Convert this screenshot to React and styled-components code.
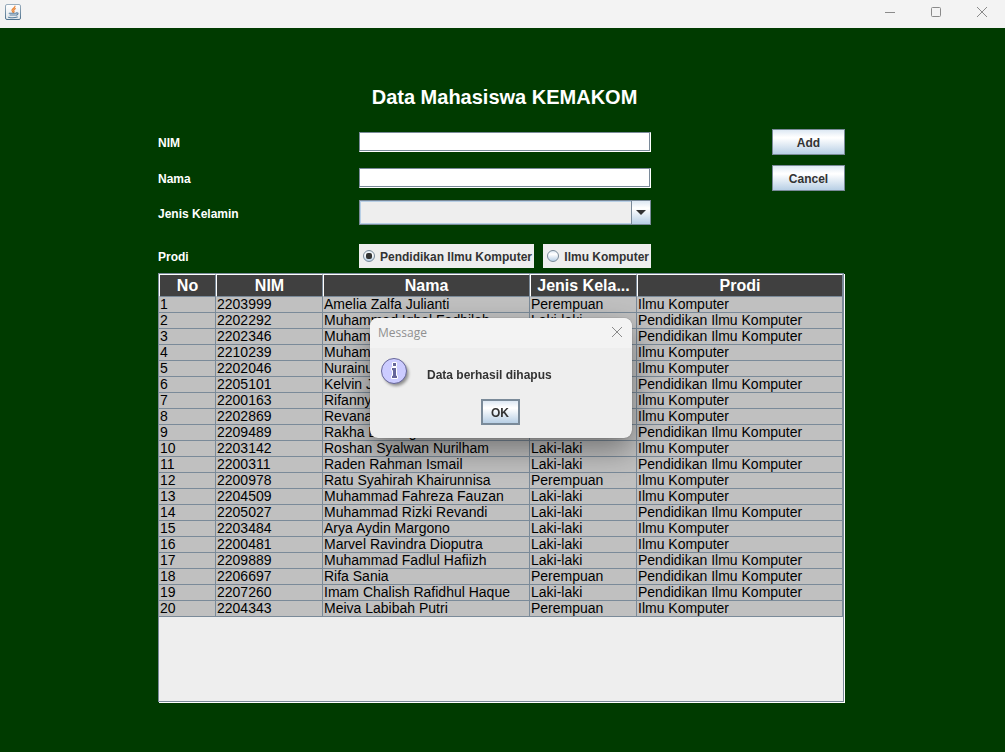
import React, { useState } from 'react';
import styled, { createGlobalStyle, css } from 'styled-components';

const STEEL = '#7a8a99';
const INK = '#333333';
const metal = css`
  background: linear-gradient(#dde8f3 0%, #ffffff 30%, #ffffff 34%, #b8cfe5 100%);
`;

const GlobalStyle = createGlobalStyle`
  * { box-sizing: border-box; }
  body {
    margin: 0;
    background: #003b00;
    font-family: "Liberation Sans", Arial, sans-serif;
  }
`;

const Window = styled.div`
  min-height: 100vh;
  display: flex;
  flex-direction: column;
  background: #003b00;
`;

const TitleBar = styled.header`
  height: 28px;
  padding: 0 0 0 5px;
  display: flex;
  align-items: center;
  justify-content: space-between;
  background: #f3f3f3;
`;

const JavaIcon = styled.svg`
  width: 16px;
  height: 16px;
  margin-bottom: 4px;
`;

const WindowControls = styled.div`
  display: flex;
  margin-bottom: 4px;
`;

const IconButton = styled.button`
  width: ${(p) => p.$width || 46}px;
  height: 24px;
  padding: 0;
  border: 0;
  background: none;
  display: flex;
  align-items: center;
  justify-content: center;
`;

const Content = styled.main`
  flex: 1;
  padding: 57px 160px 49px 158px;
  display: flex;
  flex-direction: column;
`;

const Heading = styled.h1`
  margin: 0 0 20px;
  padding-left: 6px;
  font-size: 20px;
  line-height: 24px;
  text-align: center;
  color: #ffffff;
`;

const Form = styled.form`
  display: flex;
  flex-direction: column;
`;

const Row = styled.div`
  display: grid;
  grid-template-columns: 201px minmax(0, 1fr) 73px;
  align-items: center;
  min-height: 24px;
  margin-bottom: ${(p) => p.$gap}px;
`;

const Label = styled.label`
  padding-top: 2px;
  font-size: 12px;
  line-height: 16px;
  font-weight: bold;
  color: #ffffff;
`;

const Field = styled.div`
  margin-right: 121px;
  display: flex;
  justify-content: space-between;
`;

const TextField = styled.input`
  flex: 1;
  min-width: 0;
  height: 20px;
  padding: 0 3px;
  border: 1px solid #ffffff;
  border-top-color: ${STEEL};
  border-left-color: ${STEEL};
  border-radius: 0;
  box-shadow: inset -1px -1px 0 ${STEEL};
  background: #ffffff;
  font: 12px "Liberation Sans", Arial, sans-serif;
  outline: none;
`;

const ComboBox = styled.div`
  flex: 1;
  height: 25px;
  display: grid;
  grid-template-columns: minmax(0, 1fr) 19px;
  border: 1px solid ${STEEL};
`;

const Select = styled.select`
  grid-column: 1 / 3;
  grid-row: 1;
  appearance: none;
  width: 100%;
  height: 23px;
  padding: 0 24px 0 4px;
  border: 1px solid #b8cfe5;
  border-radius: 0;
  background: #eeeeee;
  font: bold 12px "Liberation Sans", Arial, sans-serif;
  color: ${INK};
  outline: none;
`;

const ComboArrow = styled.span`
  grid-column: 2;
  grid-row: 1;
  z-index: 1;
  display: flex;
  align-items: center;
  justify-content: center;
  border-left: 1px solid ${STEEL};
  pointer-events: none;
  ${metal}
`;

const RadioLabel = styled.label`
  height: 24px;
  padding: 0 2px 0 4px;
  display: flex;
  align-items: center;
  gap: 5px;
  background: #eeeeee;
  font-size: 12px;
  line-height: 16px;
  font-weight: bold;
  color: ${INK};
  white-space: nowrap;
`;

const RadioText = styled.span`
  padding-top: 2px;
`;

const Radio = styled.input`
  appearance: none;
  flex: none;
  width: 12px;
  height: 12px;
  margin: 0;
  border: 1px solid ${STEEL};
  border-radius: 50%;
  display: grid;
  place-items: center;
  ${metal}

  &:checked::after {
    content: "";
    width: 6px;
    height: 6px;
    border-radius: 2px;
    background: ${INK};
  }
`;

const Button = styled.button`
  height: 26px;
  padding: 1px 0 0;
  border: ${(p) => (p.$focused ? 2 : 1)}px solid ${STEEL};
  border-radius: 0;
  ${metal}
  font: bold 12px "Liberation Sans", Arial, sans-serif;
  color: ${INK};
  ${(p) => p.$focused && 'width: 39px;'}
`;

const ScrollPane = styled.div`
  flex: 1;
  margin: 0 1px 1px 0;
  border: 1px solid ${STEEL};
  box-shadow: 1px 1px 0 #ffffff;
  background: #eeeeee;
`;

const Table = styled.table`
  width: 100%;
  table-layout: fixed;
  border-collapse: separate;
  border-spacing: 0;
`;

const HeadCell = styled.th`
  height: 23px;
  padding: 0;
  border: 1px solid ${STEEL};
  border-top-color: #ffffff;
  border-left-color: #ffffff;
  background: #404040;
  font-size: 16px;
  line-height: 20px;
  color: #ffffff;
  white-space: nowrap;
`;

const Cell = styled.td`
  height: 16px;
  padding: 0 0 0 1px;
  border: solid ${STEEL};
  border-width: 0 1px 1px 0;
  background: #c0c0c0;
  font-size: 14px;
  line-height: 15px;
  color: #000000;
  white-space: nowrap;
  overflow: hidden;
`;

const Dialog = styled.section`
  position: fixed;
  top: 318px;
  left: 370px;
  width: 262px;
  height: 120px;
  border-radius: 8px;
  overflow: hidden;
  background: #eeeeee;
  box-shadow: 0 0 1px rgba(0, 0, 0, 0.6), 0 12px 30px rgba(0, 0, 0, 0.4);
`;

const DialogBar = styled.div`
  height: 30px;
  padding-left: 8px;
  display: flex;
  align-items: flex-start;
  justify-content: space-between;
  background: #f3f3f3;
  font: 12px/30px "Open Sans", "Noto Sans", sans-serif;
  color: #909090;

  ${IconButton} {
    height: 28px;
  }
`;

const DialogBody = styled.div`
  padding: 9px 0 0 10px;
  display: flex;
  align-items: center;
  gap: 15px;
`;

const Message = styled.p`
  margin: 0;
  padding-top: 4px;
  font-size: 12px;
  line-height: 16px;
  font-weight: bold;
  color: ${INK};
`;

const DialogActions = styled.div`
  margin-top: 10px;
  padding-right: 2px;
  display: flex;
  justify-content: center;
`;

const COLUMNS = [
  ['No', 57],
  ['NIM', 107],
  ['Nama', 207],
  ['Jenis Kela...', 107],
  ['Prodi', null],
];

const L = 'Laki-laki';
const P = 'Perempuan';
const IK = 'Ilmu Komputer';
const PIK = 'Pendidikan Ilmu Komputer';

const STUDENTS = [
  ['2203999', 'Amelia Zalfa Julianti', P, IK],
  ['2202292', 'Muhammad Iqbal Fadhilah', L, PIK],
  ['2202346', 'Muhammad Rifky Afandi', L, PIK],
  ['2210239', 'Muhammad Hisyam', L, IK],
  ['2202046', 'Nurainun', P, IK],
  ['2205101', 'Kelvin Julian Putra', L, PIK],
  ['2200163', 'Rifanny Lysara', P, IK],
  ['2202869', 'Revana Faliha Salma', P, IK],
  ['2209489', 'Rakha Dhifiargo', L, PIK],
  ['2203142', 'Roshan Syalwan Nurilham', L, IK],
  ['2200311', 'Raden Rahman Ismail', L, PIK],
  ['2200978', 'Ratu Syahirah Khairunnisa', P, IK],
  ['2204509', 'Muhammad Fahreza Fauzan', L, IK],
  ['2205027', 'Muhammad Rizki Revandi', L, PIK],
  ['2203484', 'Arya Aydin Margono', L, IK],
  ['2200481', 'Marvel Ravindra Dioputra', L, IK],
  ['2209889', 'Muhammad Fadlul Hafiizh', L, PIK],
  ['2206697', 'Rifa Sania', P, PIK],
  ['2207260', 'Imam Chalish Rafidhul Haque', L, PIK],
  ['2204343', 'Meiva Labibah Putri', P, IK],
];

function CloseGlyph() {
  return (
    <svg width="12" height="12" viewBox="0 0 12 12" fill="none" stroke="#8a8a8a" aria-hidden="true">
      <path d="M1 1l10 10M11 1L1 11" />
    </svg>
  );
}

function CupIcon() {
  return (
    <JavaIcon viewBox="0 0 16 16" aria-hidden="true">
      <defs>
        <linearGradient id="frame" x1="0" y1="0" x2="0" y2="1">
          <stop offset="0" stopColor="#9aaebe" />
          <stop offset="1" stopColor="#50738f" />
        </linearGradient>
        <linearGradient id="sheet" x1="0" y1="0" x2="0" y2="1">
          <stop offset="0" stopColor="#ffffff" />
          <stop offset="1" stopColor="#dfe5ea" />
        </linearGradient>
      </defs>
      <rect x=".5" y=".5" width="15" height="15" rx="1.5" fill="url(#sheet)" stroke="url(#frame)" />
      <g fill="none" strokeLinecap="round">
        <path d="M10 2.2C10 4 6.6 4.6 7 6.4c.1.7.8 1.1.9 1.900M10.300 4.600c-1.500.7-2 1.500-1.400 2.300.4.600.2 1-.2 1.400" stroke="#ea8435" strokeWidth="1.2" />
        <path d="M4.200 9.200h7M5 11h5.300M11.500 8.900c2.200-.3 2 1.800-.3 2.200M3.500 13.200c2.500.6 6.500.6 8.800-.2" stroke="#5a7f9f" strokeWidth="1.1" />
      </g>
    </JavaIcon>
  );
}

function InfoIcon() {
  return (
    <svg width="32" height="32" viewBox="0 0 32 32" aria-hidden="true">
      <defs>
        <filter id="soft" x="-20%" y="-20%" width="150%" height="150%">
          <feGaussianBlur stdDeviation="1.5" />
        </filter>
      </defs>
      <circle cx="16" cy="16.5" r="12.5" fill="#000" opacity=".4" filter="url(#soft)" />
      <circle cx="14" cy="14" r="12.5" fill="#ccccff" stroke="#666699" />
      <path d="M12.500 5.500h4v4h-4zM11.500 10.500h5v8h1v3h-6v-3h1v-5h-1z" fill="#666699" stroke="#ffffff" />
    </svg>
  );
}

export default function App() {
  const [prodi, setProdi] = useState(PIK);
  const [open, setOpen] = useState(true);

  return (
    <>
      <GlobalStyle />
      <Window>
        <TitleBar>
          <CupIcon />
          <WindowControls>
            <IconButton aria-label="Minimize">
              <svg width="12" height="12" fill="none" stroke="#8a8a8a"><path d="M1 6.500h10" /></svg>
            </IconButton>
            <IconButton aria-label="Maximize">
              <svg width="12" height="12" fill="none" stroke="#8a8a8a"><rect x="1.500" y="1.500" width="9" height="9" rx="1" /></svg>
            </IconButton>
            <IconButton aria-label="Close"><CloseGlyph /></IconButton>
          </WindowControls>
        </TitleBar>

        <Content>
          <Heading>Data Mahasiswa KEMAKOM</Heading>
          <Form onSubmit={(e) => e.preventDefault()}>
            <Row $gap={10}>
              <Label htmlFor="nim">NIM</Label>
              <Field><TextField id="nim" type="text" /></Field>
              <Button type="submit">Add</Button>
            </Row>
            <Row $gap={9}>
              <Label htmlFor="nama">Nama</Label>
              <Field><TextField id="nama" type="text" /></Field>
              <Button type="reset">Cancel</Button>
            </Row>
            <Row $gap={19}>
              <Label htmlFor="kelamin">Jenis Kelamin</Label>
              <Field>
                <ComboBox>
                  <Select id="kelamin" defaultValue="">
                    <option value="" />
                    <option>{L}</option>
                    <option>{P}</option>
                  </Select>
                  <ComboArrow>
                    <svg width="10" height="5" viewBox="0 0 10 5" aria-hidden="true">
                      <path d="M0 0h10L5 5z" fill={INK} />
                    </svg>
                  </ComboArrow>
                </ComboBox>
              </Field>
            </Row>
            <Row $gap={5}>
              <Label as="span">Prodi</Label>
              <Field role="radiogroup" aria-label="Prodi">
                {[PIK, IK].map((name) => (
                  <RadioLabel key={name}>
                    <Radio
                      type="radio"
                      name="prodi"
                      checked={prodi === name}
                      onChange={() => setProdi(name)}
                    />
                    <RadioText>{name}</RadioText>
                  </RadioLabel>
                ))}
              </Field>
            </Row>
          </Form>

          <ScrollPane>
            <Table>
              <colgroup>
                {COLUMNS.map(([name, width]) => (
                  <col key={name} width={width || undefined} />
                ))}
              </colgroup>
              <thead>
                <tr>
                  {COLUMNS.map(([name]) => (
                    <HeadCell key={name} scope="col">{name}</HeadCell>
                  ))}
                </tr>
              </thead>
              <tbody>
                {STUDENTS.map((student, i) => (
                  <tr key={student[0]}>
                    <Cell>{i + 1}</Cell>
                    {student.map((value, j) => (
                      <Cell key={j}>{value}</Cell>
                    ))}
                  </tr>
                ))}
              </tbody>
            </Table>
          </ScrollPane>
        </Content>
      </Window>

      {open && (
        <Dialog role="dialog" aria-labelledby="dialog-title">
          <DialogBar>
            <span id="dialog-title">Message</span>
            <IconButton $width={30} aria-label="Close message" onClick={() => setOpen(false)}>
              <CloseGlyph />
            </IconButton>
          </DialogBar>
          <DialogBody>
            <InfoIcon />
            <Message>Data berhasil dihapus</Message>
          </DialogBody>
          <DialogActions>
            <Button $focused onClick={() => setOpen(false)}>OK</Button>
          </DialogActions>
        </Dialog>
      )}
    </>
  );
}
